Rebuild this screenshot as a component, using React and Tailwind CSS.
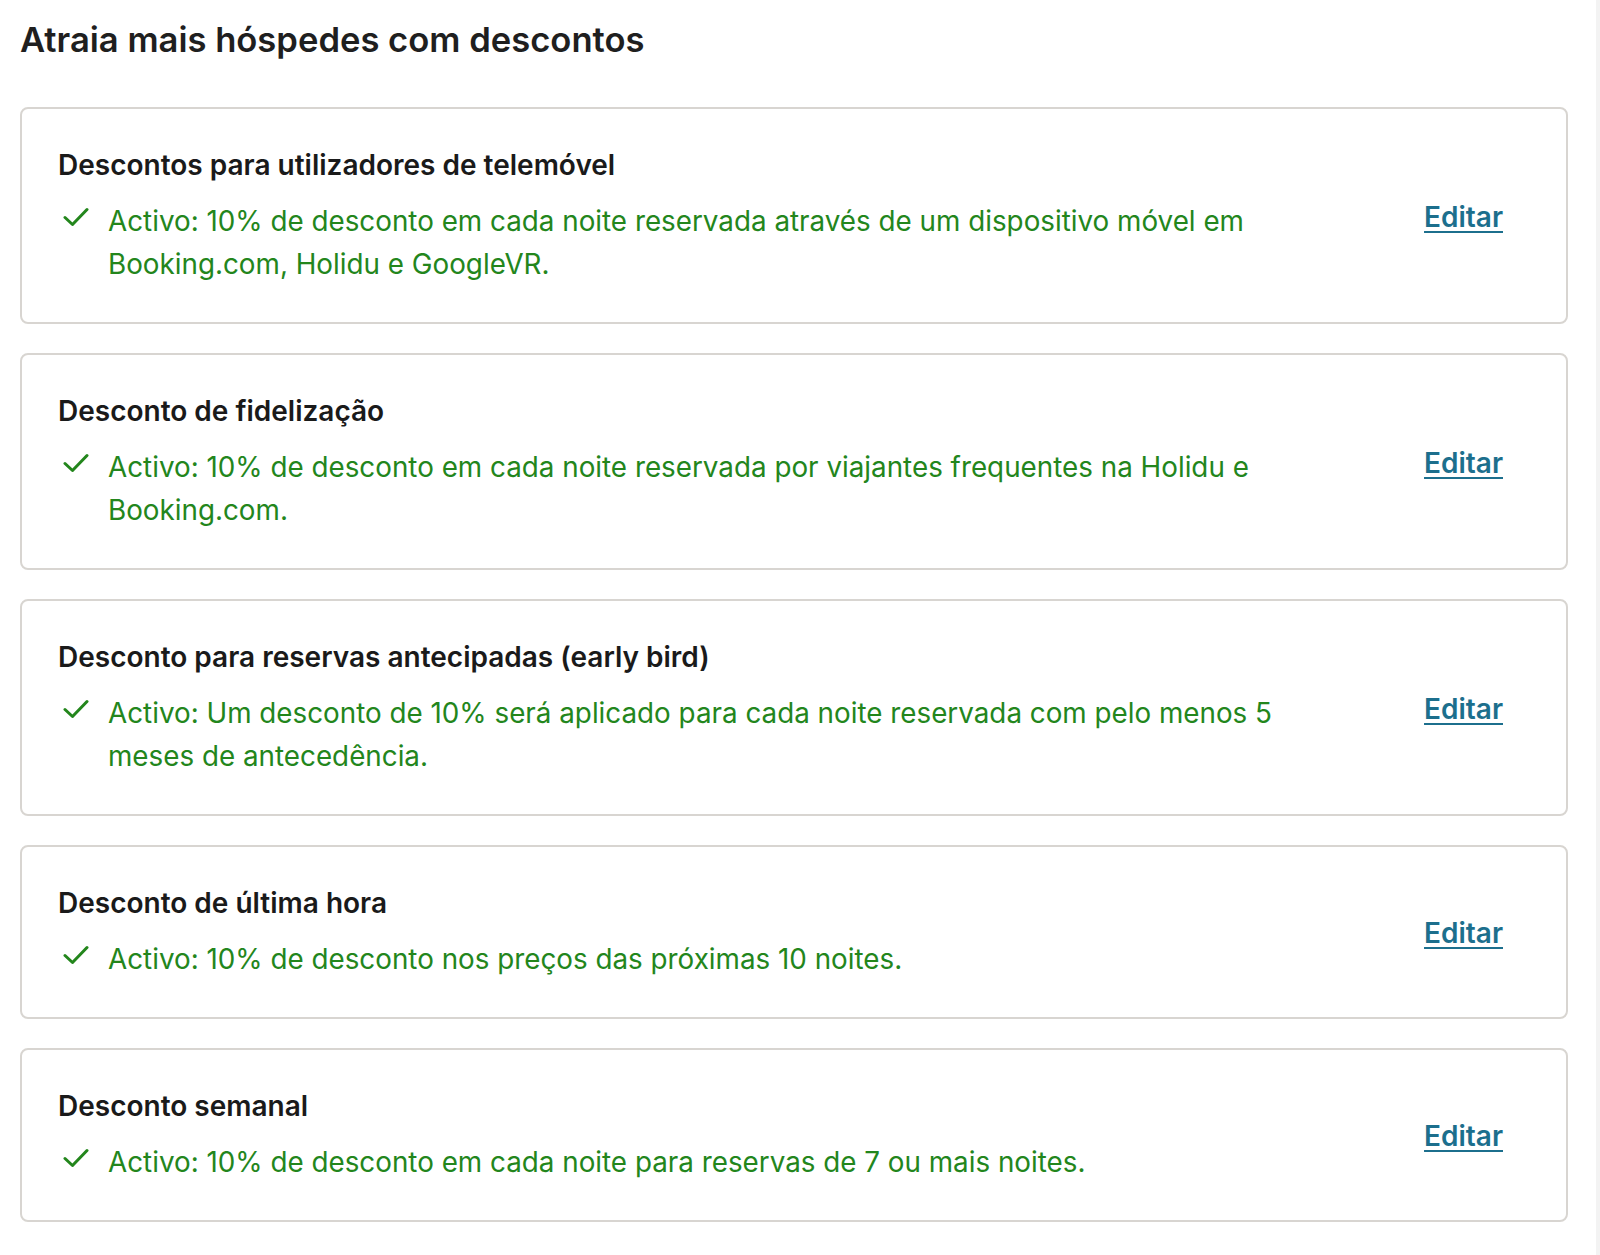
const discounts = [
  {
    title: "Descontos para utilizadores de telemóvel",
    text: "Activo: 10% de desconto em cada noite reservada através de um dispositivo móvel em Booking.com, Holidu e GoogleVR.",
  },
  {
    title: "Desconto de fidelização",
    text: "Activo: 10% de desconto em cada noite reservada por viajantes frequentes na Holidu e Booking.com.",
  },
  {
    title: "Desconto para reservas antecipadas (early bird)",
    text: "Activo: Um desconto de 10% será aplicado para cada noite reservada com pelo menos 5 meses de antecedência.",
  },
  {
    title: "Desconto de última hora",
    text: "Activo: 10% de desconto nos preços das próximas 10 noites.",
  },
  {
    title: "Desconto semanal",
    text: "Activo: 10% de desconto em cada noite para reservas de 7 ou mais noites.",
  },
];

function CheckIcon() {
  return (
    <svg width="26" height="20" viewBox="0 0 26 20" fill="none" className="shrink-0 mt-[7px]">
      <path
        d="M2 10.5 L9.5 17.5 L24 2.5"
        stroke="#23861c"
        strokeWidth="3"
        strokeLinecap="round"
        strokeLinejoin="round"
      />
    </svg>
  );
}

function DiscountCard({ title, text }) {
  return (
    <div className="flex items-center rounded-[8px] border-2 border-[#d8d5d1] bg-white pl-[36px] pr-[63px] pt-[38px] pb-[36px]">
      <div className="flex-1 min-w-0">
        <h3 className="text-[28px] leading-[36px] font-semibold text-[#1a1a1a]">{title}</h3>
        <div className="mt-[17px] flex gap-[19px] pl-[5px]">
          <CheckIcon />
          <p className="text-[27.8px] leading-[43px] text-[#23861c]">{text}</p>
        </div>
      </div>
      <a href="#" className="ml-[96px] text-[28px] font-semibold text-[#1c6f8d] underline decoration-2 underline-offset-4">
        Editar
      </a>
    </div>
  );
}

export default function App() {
  return (
    <div className="min-h-[1255px] bg-white flex font-['Inter',sans-serif]">
      <div className="flex-1 pl-[20px] pr-[28px]">
        <h2 className="pt-[18px] text-[34.6px] leading-[42px] font-semibold text-[#1f1f1f]">
          Atraia mais hóspedes com descontos
        </h2>
        <div className="mt-[47px] flex flex-col gap-[29px]">
          {discounts.map((d) => (
            <DiscountCard key={d.title} {...d} />
          ))}
        </div>
      </div>
      <div className="w-[4px] bg-[#f3f3f3]" />
    </div>
  );
}
